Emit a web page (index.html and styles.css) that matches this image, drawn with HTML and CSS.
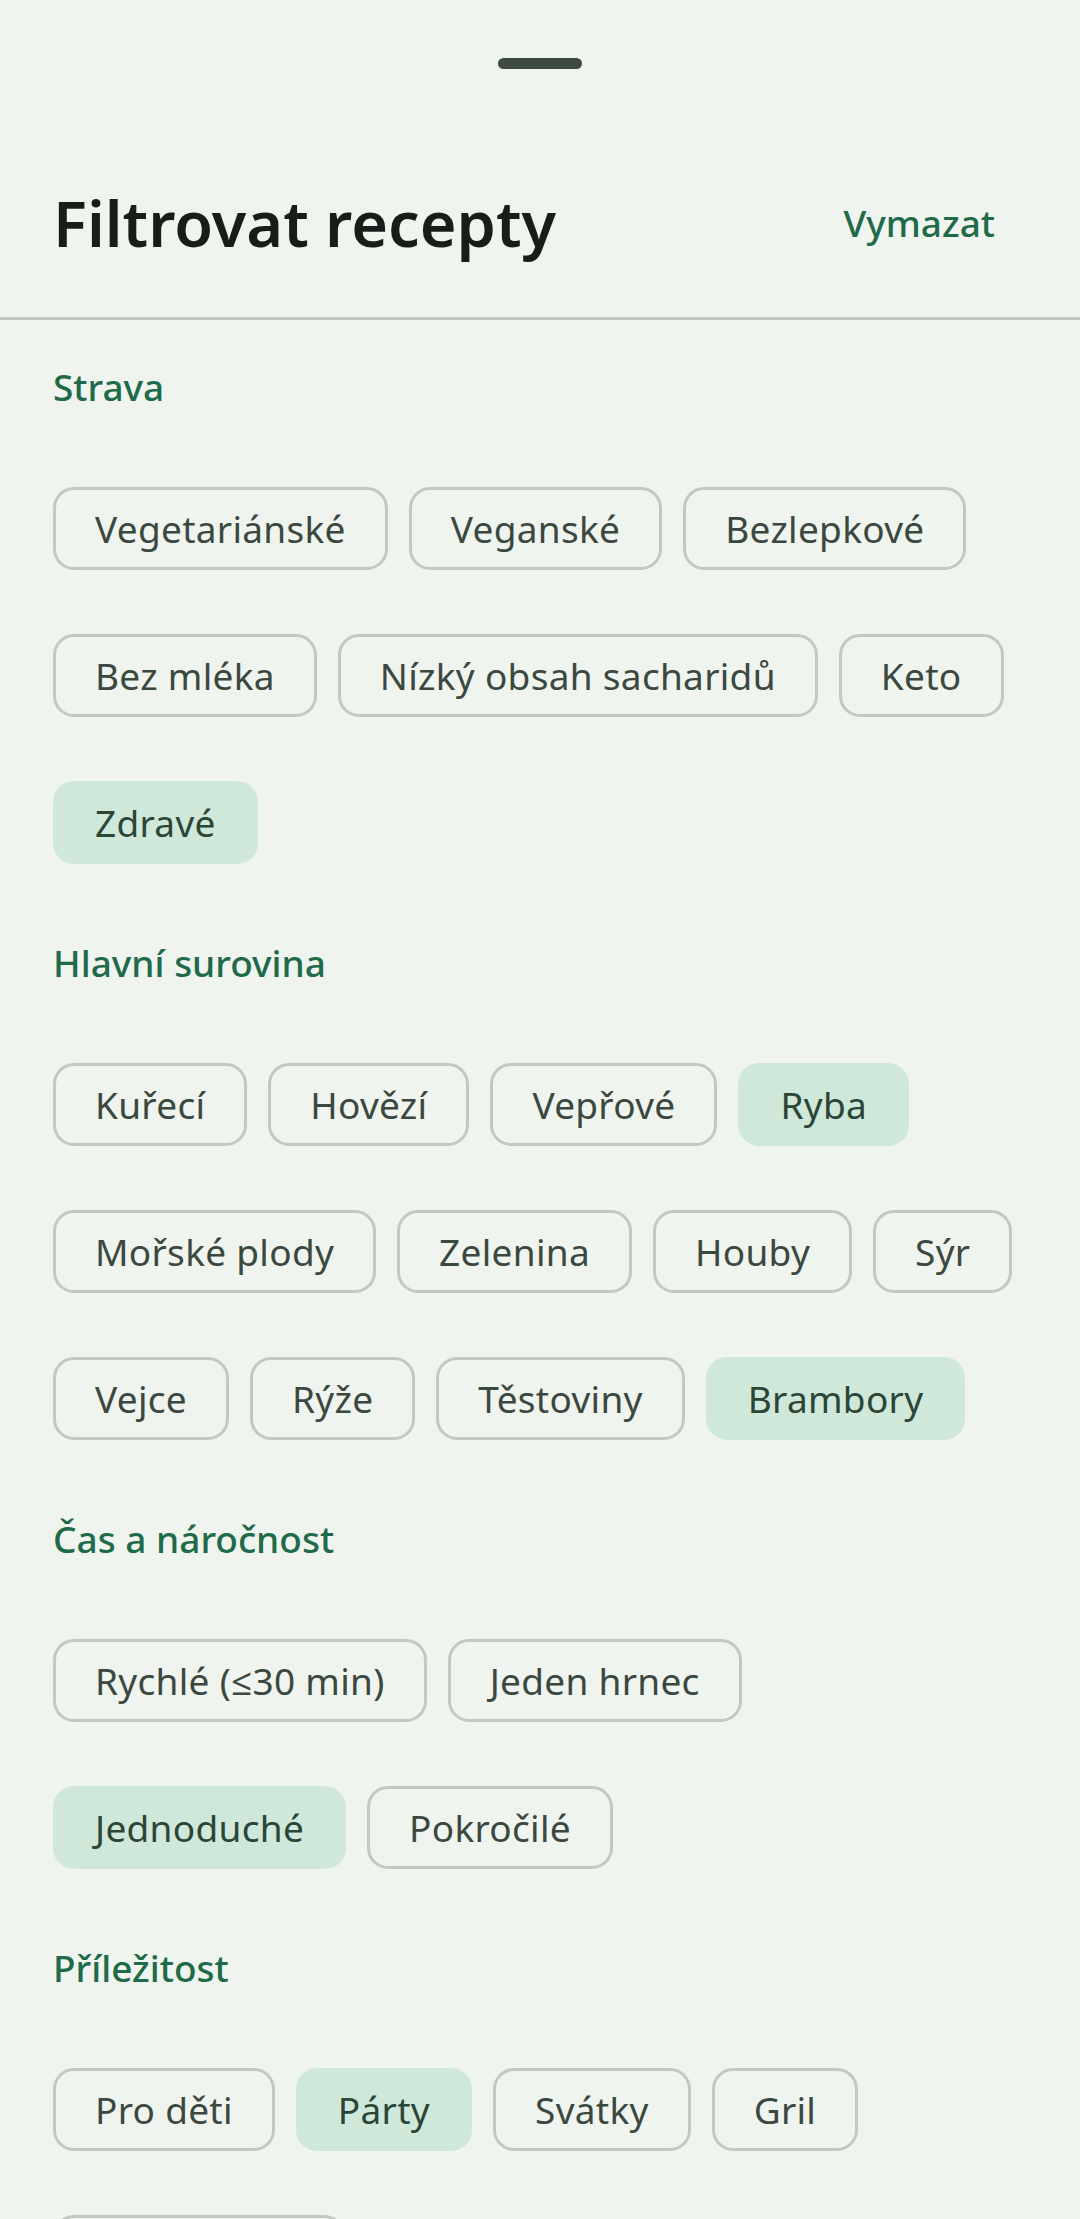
FILE: index.html
```html
<!DOCTYPE html>
<html lang="cs">
<head>
  <meta charset="UTF-8">
  <meta name="viewport" content="width=device-width, initial-scale=1.0">
  <title>Filtrovat recepty</title>
  <link rel="stylesheet" href="styles.css">
</head>
<body>
  <div class="sheet">
    <div class="drag-handle"></div>

    <div class="sheet-header">
      <h1>Filtrovat recepty</h1>
      <button class="clear-btn">Vymazat</button>
    </div>
    <hr class="divider">

    <section class="filter-group">
      <h2>Strava</h2>
      <div class="chips">
        <button class="chip">Vegetariánské</button>
        <button class="chip">Veganské</button>
        <button class="chip">Bezlepkové</button>
        <button class="chip">Bez mléka</button>
        <button class="chip">Nízký obsah sacharidů</button>
        <button class="chip">Keto</button>
        <button class="chip selected">Zdravé</button>
      </div>
    </section>

    <section class="filter-group">
      <h2>Hlavní surovina</h2>
      <div class="chips">
        <button class="chip">Kuřecí</button>
        <button class="chip">Hovězí</button>
        <button class="chip">Vepřové</button>
        <button class="chip selected">Ryba</button>
        <button class="chip">Mořské plody</button>
        <button class="chip">Zelenina</button>
        <button class="chip">Houby</button>
        <button class="chip">Sýr</button>
        <button class="chip">Vejce</button>
        <button class="chip">Rýže</button>
        <button class="chip">Těstoviny</button>
        <button class="chip selected">Brambory</button>
      </div>
    </section>

    <section class="filter-group">
      <h2>Čas a náročnost</h2>
      <div class="chips">
        <button class="chip">Rychlé (≤30 min)</button>
        <button class="chip">Jeden hrnec</button>
        <button class="chip selected">Jednoduché</button>
        <button class="chip">Pokročilé</button>
      </div>
    </section>

    <section class="filter-group">
      <h2>Příležitost</h2>
      <div class="chips">
        <button class="chip">Pro děti</button>
        <button class="chip selected">Párty</button>
        <button class="chip">Svátky</button>
        <button class="chip">Gril</button>
        <button class="chip">Romantické</button>
      </div>
    </section>
  </div>
</body>
</html>
```

FILE: styles.css
```css
/* základ */
* {
  margin: 0;
  padding: 0;
  box-sizing: border-box;
  font-family: 'Noto Sans', 'Open Sans', sans-serif;
}

html, body {
  height: 100%;
  overflow: hidden;
}

body {
  background-color: #eff4ee;
  color: #191d1a;
}

/* úchyt spodního panelu */
.drag-handle {
  width: 84px;
  height: 11px;
  margin: 58px auto 0;
  border-radius: 6px;
  background-color: #3f4a42;
}

/* hlavička */
.sheet-header {
  display: flex;
  justify-content: space-between;
  align-items: center;
  margin-top: 101px;
  padding: 0 54px 0 53px;
}

.sheet-header h1 {
  font-size: 63px;
  font-weight: 600;
  line-height: normal;
  color: #191d1a;
}

.clear-btn {
  height: 105px;
  padding: 0 31px;
  background: none;
  border: none;
  font-size: 37px;
  font-weight: 500;
  color: #1f6a49;
  cursor: pointer;
}

.divider {
  height: 3px;
  margin-top: 42px;
  border: none;
  background-color: #c1c7bf;
}

/* skupiny filtrů */
.filter-group {
  padding: 41px 53px 0;
}

.filter-group + .filter-group {
  padding-top: 73px;
}

.filter-group h2 {
  margin-bottom: 75px;
  font-size: 37px;
  font-weight: 500;
  line-height: normal;
  color: #1f6a49;
}

.chips {
  display: flex;
  flex-wrap: wrap;
  column-gap: 21px;
  row-gap: 64px;
}

.chip {
  height: 83px;
  padding: 0 39px;
  border: 3px solid #c3c8c1;
  border-radius: 21px;
  background: transparent;
  font-size: 37px;
  font-weight: 400;
  letter-spacing: 0.3px;
  color: #3b4840;
  white-space: nowrap;
  cursor: pointer;
}

.chip.selected {
  background-color: #d0e8da;
  border-color: #d0e8da;
  color: #2b4536;
}
```
